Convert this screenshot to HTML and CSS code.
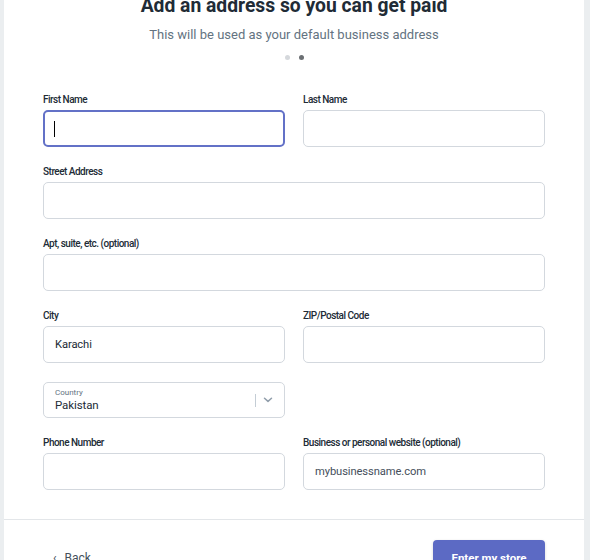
FILE: index.html
```html
<!DOCTYPE html>
<html>
<head>
<meta charset="utf-8">
<link rel="stylesheet" href="styles.css">
</head>
<body>
<div class="card">
  <div class="header">
    <h1 class="title">Add an address so you can get paid</h1>
    <p class="subtitle">This will be used as your default business address</p>
    <div class="dots"><span class="dot"></span><span class="dot dot-active"></span></div>
  </div>
  <div class="form">
    <div class="field">
      <div class="label">First Name</div>
      <div class="input input-focus"><span class="caret"></span></div>
    </div>
    <div class="field">
      <div class="label">Last Name</div>
      <div class="input"></div>
    </div>
    <div class="field span2">
      <div class="label">Street Address</div>
      <div class="input"></div>
    </div>
    <div class="field span2">
      <div class="label">Apt, suite, etc. (optional)</div>
      <div class="input"></div>
    </div>
    <div class="field">
      <div class="label">City</div>
      <div class="input"><span class="value">Karachi</span></div>
    </div>
    <div class="field">
      <div class="label">ZIP/Postal Code</div>
      <div class="input"></div>
    </div>
    <div class="field country-row">
      <div class="select">
        <div class="select-text">
          <div class="select-label">Country</div>
          <div class="select-value">Pakistan</div>
        </div>
        <div class="select-sep"></div>
        <svg class="chevron" width="10" height="6" viewBox="0 0 10 6"><path d="M1.5 1.2 L5 4.4 L8.5 1.2" fill="none" stroke="#919eab" stroke-width="1.5" stroke-linecap="round" stroke-linejoin="round"/></svg>
      </div>
    </div>
    <div class="field empty"></div>
    <div class="field">
      <div class="label">Phone Number</div>
      <div class="input"></div>
    </div>
    <div class="field">
      <div class="label">Business or personal website (optional)</div>
      <div class="input"><span class="placeholder">mybusinessname.com</span></div>
    </div>
  </div>
  <div class="footer">
    <div class="back"><span class="back-arrow">&lsaquo;</span> Back</div>
    <div class="button">Enter my store</div>
  </div>
</div>
</body>
</html>
```
FILE: styles.css
```css
html, body {
  margin: 0;
  padding: 0;
}
body {
  background: #ebeef0;
  font-family: Roboto, "Noto Sans", sans-serif;
  color: #212b36;
  height: 560px;
  overflow: hidden;
}
.card {
  background: #fff;
  width: 580px;
  margin-left: 4px;
  height: 600px;
}
.header {
  text-align: center;
}
.title {
  margin: -6px 0 0;
  font-size: 19.3px;
  line-height: 24px;
  font-weight: 700;
  color: #212b36;
}
.subtitle {
  margin: 7px 0 0;
  font-size: 13px;
  line-height: 20px;
  color: #637381;
}
.dots {
  display: flex;
  justify-content: center;
  gap: 9px;
  margin-top: 10px;
  height: 5px;
}
.dot {
  width: 5px;
  height: 5px;
  border-radius: 50%;
  background: #d5d8dc;
}
.dot-active {
  background: #6b6f73;
}
.form {
  display: grid;
  grid-template-columns: 242px 242px;
  column-gap: 18px;
  row-gap: 17px;
  padding: 32px 39px 29px 39px;
}
.span2 {
  grid-column: span 2;
}
.label {
  font-size: 10px;
  line-height: 16px;
  font-weight: 500;
  letter-spacing: -0.5px;
  color: #212b36;
  margin-bottom: 2px;
}
.input {
  box-sizing: border-box;
  height: 37px;
  border: 1px solid #d3d8de;
  border-radius: 5px;
  display: flex;
  align-items: center;
  padding: 0 11px;
  font-size: 11.2px;
  letter-spacing: -0.1px;
}
.input-focus {
  border: 2px solid #6371c7;
  padding: 0 9px;
}
.caret {
  display: block;
  width: 1px;
  height: 16px;
  background: #000;
}
.value {
  color: #212b36;
}
.placeholder {
  color: #454f5b;
}
.country-row {
  margin-top: 2px;
}
.select {
  box-sizing: border-box;
  height: 36px;
  border: 1px solid #d3d8de;
  border-radius: 5px;
  display: flex;
  align-items: center;
  padding: 0 11px 0 11px;
}
.select-text {
  flex: 1;
}
.select-label {
  font-size: 8px;
  line-height: 10px;
  color: #637381;
}
.select-value {
  font-size: 11.5px;
  line-height: 15px;
  letter-spacing: -0.1px;
  color: #212b36;
}
.select-sep {
  width: 1px;
  height: 13px;
  background: #c4cdd5;
  margin-right: 7px;
}
.chevron {
  display: block;
}
.footer {
  border-top: 1px solid #e3e6e9;
  display: flex;
  justify-content: space-between;
  align-items: flex-start;
  padding: 20px 39px 0 49px;
}
.back {
  font-size: 12px;
  line-height: 36px;
  color: #454f5b;
}
.back-arrow {
  margin-right: 5px;
}
.button {
  box-sizing: border-box;
  width: 112px;
  height: 36px;
  background: #5c6ac4;
  color: #fff;
  border-radius: 4px;
  font-size: 11.5px;
  font-weight: 700;
  line-height: 36px;
  text-align: center;
  box-shadow: 0 1px 3px rgba(63, 63, 68, 0.2);
}
```
